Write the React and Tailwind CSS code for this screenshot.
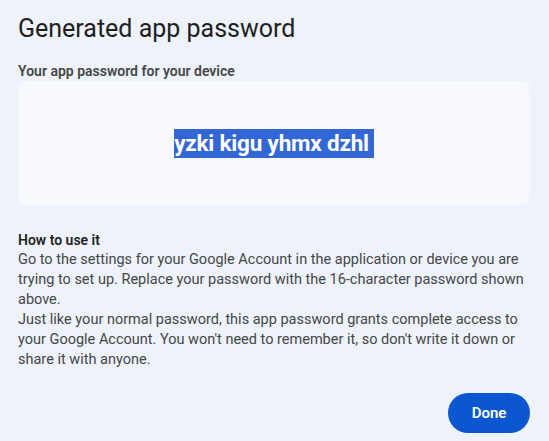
import React from 'react';

const App = () => {
  return (
    <div className="w-[549px] h-[441px] bg-[#eef2fa] text-[#1f1f1f] overflow-hidden" style={{ fontFamily: 'Roboto, "Open Sans", sans-serif' }}>
      <div className="pl-[18px] pr-[19px] pt-[13px]">
        <h1 className="text-[25px] leading-[32px] font-normal text-[#1f1f1f]">Generated app password</h1>

        <div className="mt-[16px] text-[14px] leading-[20px] font-semibold text-[#444746]">
          Your app password for your device
        </div>
        <div className="h-[124px] rounded-[8px] bg-[#f8f9fd] flex items-center justify-center">
          <span className="bg-[#3367d6] text-white text-[22.5px] leading-[29px] font-bold tracking-[-0.2px] pr-[5px]">
            yzki kigu yhmx dzhl
          </span>
        </div>

        {/* How to use */}
        <div className="mt-[25px] text-[14.5px] leading-[20px] text-[#444746]">
          <div className="font-semibold text-[14px] text-[#1f1f1f]">How to use it</div>
          <p>
            Go to the settings for your Google Account in the application or device you are trying to set up. Replace your password with the 16-character password shown above.
          </p>
          <p>
            Just like your normal password, this app password grants complete access to your Google Account. You won't need to remember it, so don't write it down or share it with anyone.
          </p>
        </div>

        <div className="mt-[23px] flex justify-end">
          <button className="w-[82px] h-[40px] rounded-full bg-[#0b57d0] text-white text-[15px] font-semibold">
            Done
          </button>
        </div>
      </div>
    </div>
  );
};

export default App;
